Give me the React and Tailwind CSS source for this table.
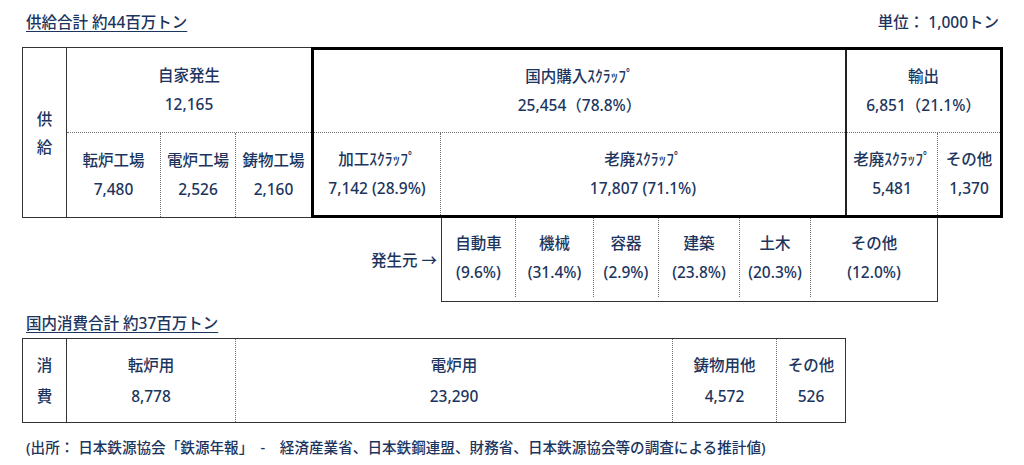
import React from "react";

const Cell = ({ className = "", top, bottom }) => (
  <div className={"flex flex-col items-center justify-center leading-[29px] whitespace-nowrap " + className}>
    <div>{top}</div>
    <div>{bottom}</div>
  </div>
);

export default function App() {
  return (
    <div className="w-[1024px] h-[465px] bg-white text-[#1c355e] font-['Noto_Sans','Noto_Sans_CJK_JP',sans-serif] font-medium text-[15.5px] overflow-hidden">
      <div className="pl-[22px] pt-[12px]">
        {/* header row */}
        <div className="flex justify-between items-center h-[22px] w-[977px] pl-[4px]">
          <span className="underline underline-offset-[3px] decoration-1">供給合計 約44百万トン</span>
          <span>単位： 1,000トン</span>
        </div>

        {/* supply table */}
        <div className="mt-[13px] flex h-[171px]">
          <div className="w-[289px] flex border-l border-t border-b border-[#333]">
            <div className="w-[44px] border-r border-[#333] flex flex-col items-center justify-center leading-[28px]">
              <div>供</div>
              <div>給</div>
            </div>
            <div className="flex-1 flex flex-col">
              <Cell className="h-[85px] border-b border-dotted border-[#6f6f6f]" top="自家発生" bottom="12,165" />
              <div className="flex-1 flex">
                <Cell className="w-[94px] border-r border-dotted border-[#6f6f6f]" top="転炉工場" bottom="7,480" />
                <Cell className="w-[75px] border-r border-dotted border-[#6f6f6f]" top="電炉工場" bottom="2,526" />
                <Cell className="flex-1" top="鋳物工場" bottom="2,160" />
              </div>
            </div>
          </div>
          <div className="w-[692px] flex border-[3px] border-black">
            <div className="w-[531px] flex flex-col">
              <Cell className="h-[83px] border-b border-dotted border-[#6f6f6f]" top="国内購入ｽｸﾗｯﾌﾟ" bottom="25,454（78.8%）" />
              <div className="flex-1 flex">
                <Cell className="w-[127px] border-r border-dotted border-[#6f6f6f]" top="加工ｽｸﾗｯﾌﾟ" bottom="7,142 (28.9%)" />
                <Cell className="flex-1" top="老廃ｽｸﾗｯﾌﾟ" bottom="17,807 (71.1%)" />
              </div>
            </div>
            <div className="flex-1 flex flex-col border-l-2 border-[#222]">
              <Cell className="h-[83px] border-b border-dotted border-[#6f6f6f]" top="輸出" bottom="6,851（21.1%）" />
              <div className="flex-1 flex">
                <Cell className="w-[91px] border-r border-dotted border-[#6f6f6f]" top="老廃ｽｸﾗｯﾌﾟ" bottom="5,481" />
                <Cell className="flex-1" top="その他" bottom="1,370" />
              </div>
            </div>
          </div>
        </div>

        {/* source breakdown */}
        <div className="flex h-[84px]">
          <div className="w-[419px] flex items-center justify-end pr-[4px] pt-[2px]">発生元 →</div>
          <div className="w-[497px] flex border-l border-r border-b border-[#333] pb-[4px]">
            <Cell className="w-[74px] border-r border-dotted border-[#6f6f6f]" top="自動車" bottom="(9.6%)" />
            <Cell className="w-[78px] border-r border-dotted border-[#6f6f6f]" top="機械" bottom="(31.4%)" />
            <Cell className="w-[65px] border-r border-dotted border-[#6f6f6f]" top="容器" bottom="(2.9%)" />
            <Cell className="w-[81px] border-r border-dotted border-[#6f6f6f]" top="建築" bottom="(23.8%)" />
            <Cell className="w-[71px] border-r border-dotted border-[#6f6f6f]" top="土木" bottom="(20.3%)" />
            <Cell className="flex-1" top="その他" bottom="(12.0%)" />
          </div>
        </div>

        {/* consumption heading */}
        <div className="mt-[10px] h-[22px] leading-[22px] pl-[4px]">
          <span className="underline underline-offset-[3px] decoration-1">国内消費合計 約37百万トン</span>
        </div>

        {/* consumption table */}
        <div className="mt-[4px] w-[824px] h-[85px] flex border border-[#333]">
          <div className="w-[44px] border-r border-[#333] flex flex-col items-center justify-center leading-[31px]">
            <div>消</div>
            <div>費</div>
          </div>
          <Cell className="w-[169px] border-r border-dotted border-[#6f6f6f] leading-[31px]" top="転炉用" bottom="8,778" />
          <Cell className="w-[437px] border-r border-dotted border-[#6f6f6f] leading-[31px]" top="電炉用" bottom="23,290" />
          <Cell className="w-[104px] border-r border-dotted border-[#6f6f6f] leading-[31px]" top="鋳物用他" bottom="4,572" />
          <Cell className="flex-1 leading-[31px]" top="その他" bottom="526" />
        </div>

        {/* footer */}
        <div className="mt-[13px] h-[22px] leading-[22px] pl-[4px] text-[14.6px] whitespace-nowrap">
          (出所： 日本鉄源協会「鉄源年報」　-　経済産業省、日本鉄鋼連盟、財務省、日本鉄源協会等の調査による推計値)
        </div>
      </div>
    </div>
  );
}
